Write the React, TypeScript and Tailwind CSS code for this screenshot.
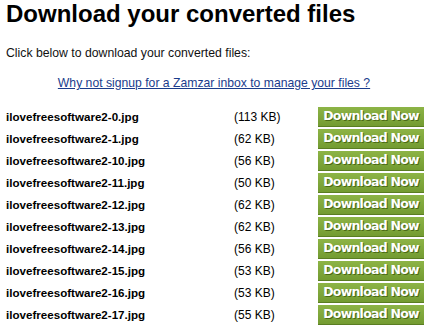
const files = [
  { name: "ilovefreesoftware2-0.jpg", size: "113 KB" },
  { name: "ilovefreesoftware2-1.jpg", size: "62 KB" },
  { name: "ilovefreesoftware2-10.jpg", size: "56 KB" },
  { name: "ilovefreesoftware2-11.jpg", size: "50 KB" },
  { name: "ilovefreesoftware2-12.jpg", size: "62 KB" },
  { name: "ilovefreesoftware2-13.jpg", size: "62 KB" },
  { name: "ilovefreesoftware2-14.jpg", size: "56 KB" },
  { name: "ilovefreesoftware2-15.jpg", size: "53 KB" },
  { name: "ilovefreesoftware2-16.jpg", size: "53 KB" },
  { name: "ilovefreesoftware2-17.jpg", size: "55 KB" },
];

const DownloadButton = () => (
  <button
    type="button"
    className="flex h-5 w-[106px] items-center justify-center border-b border-b-[#5a7d22] bg-gradient-to-b from-[#8db446] to-[#739b31] font-['DejaVu_Sans',Verdana,sans-serif] text-[12.5px] font-bold leading-none tracking-[-0.06em] text-white [text-shadow:1px_1px_0_#4a6a16]"
  >
    Download Now
  </button>
);

export default function App() {
  return (
    <div className="min-h-[327px] w-[428px] bg-white pl-[6px] font-['Liberation_Sans',Arial,sans-serif] text-black">
      <h1 className="text-[24px] font-bold leading-[28px]">Download your converted files</h1>
      <p className="mt-[18px] text-[12.25px] leading-[15px] text-[#111]">
        Click below to download your converted files:
      </p>
      <div className="mt-[15px] pr-[6px] text-center text-[12.2px] leading-[15px]">
        <a href="#" className="text-[#1a3c8c] underline">
          Why not signup for a Zamzar inbox to manage your files ?
        </a>
      </div>
      <div className="mt-[16px] flex flex-col gap-[2px]">
        {files.map((f) => (
          <div key={f.name} className="grid h-5 grid-cols-[228px_84px_106px] items-center text-[12px] leading-[14px]">
            <span className="text-[11.6px] font-bold">{f.name}</span>
            <span>({f.size})</span>
            <DownloadButton />
          </div>
        ))}
      </div>
    </div>
  );
}
